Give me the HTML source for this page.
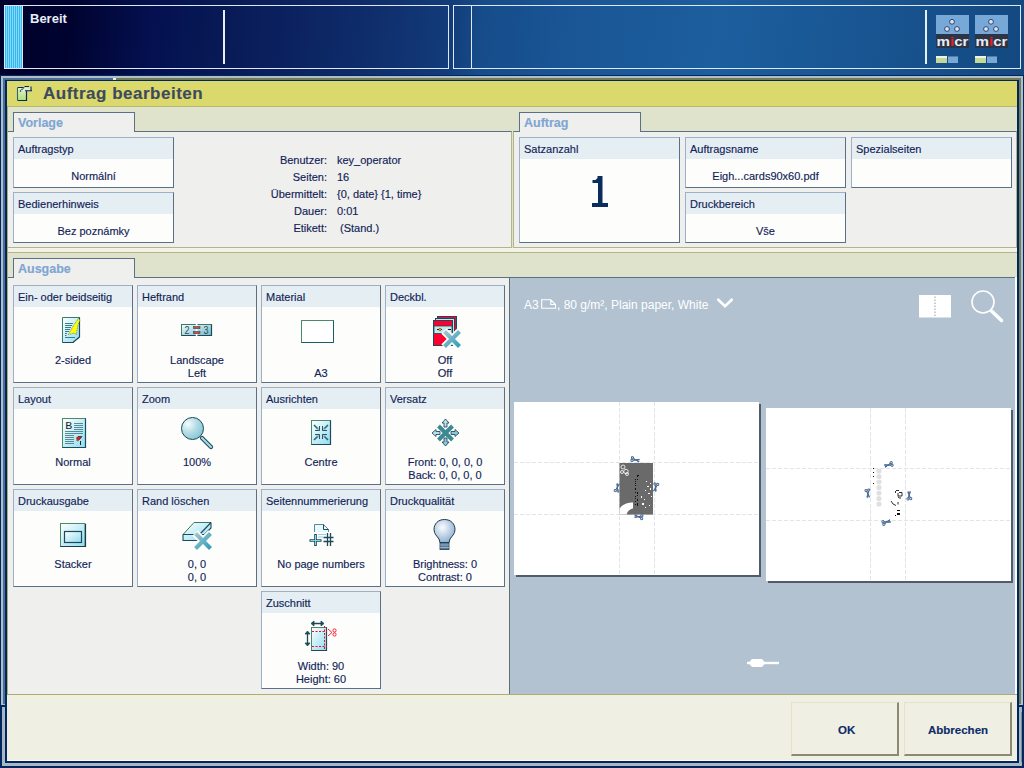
<!DOCTYPE html><html><head><meta charset="utf-8"><style>
*{margin:0;padding:0;box-sizing:border-box}
html,body{width:1024px;height:768px;overflow:hidden}
body{position:relative;background:#002860;font-family:"Liberation Sans",sans-serif;font-size:11px;color:#121e58}
.a{position:absolute}
.nw{white-space:nowrap;-webkit-text-stroke:0.15px currentColor}
.card{position:absolute;border:1px solid;border-color:#9cb0c8 #5a7088 #5a7088 #9cb0c8;background:#fdfdfb}
.card .h{position:absolute;left:0;top:0;right:0;background:#e5eef2}
.tab{position:absolute;border:1px solid #5a7088;border-bottom:none;background:#efefed;height:20px}
svg{position:absolute;overflow:visible}
</style></head><body>
<div class="a" style="left:0;top:0;width:1024px;height:76px;background:linear-gradient(95deg,#00012c 0%,#00032f 7%,#041050 15%,#081a56 22%,#0c2462 30%,#10306e 38%,#133c7a 44%,#164c8a 47%,#1a5696 56%,#1c5e9e 70%,#185490 86%,#13487f 100%)"></div>
<div class="a" style="left:4px;top:5px;width:445px;height:64px;border:1px solid #dfe8f4"></div>
<div class="a" style="left:5px;top:6px;width:17px;height:62px;background:repeating-linear-gradient(90deg,#2cbaf8 0 1px,#8ed6f0 1px 2px)"></div>
<div class="a" style="left:22px;top:6px;width:1px;height:62px;background:#dfe8f4"></div>
<div class="a nw" style="left:30px;top:11px;font-size:13px;line-height:15px;color:#e8eef8;font-weight:bold;-webkit-text-stroke:0;">Bereit</div>
<div class="a" style="left:223px;top:10px;width:2px;height:54px;background:#e8eef8"></div>
<div class="a" style="left:453px;top:5px;width:568px;height:64px;border:1px solid #dfe8f4"></div>
<div class="a" style="left:471px;top:6px;width:1px;height:62px;background:#dfe8f4"></div>
<div class="a" style="left:925px;top:10px;width:2px;height:54px;background:#e8eef8"></div>
<svg style="left:0;top:0;pointer-events:none" width="1024" height="80" viewBox="0 0 1024 80"><rect x="936" y="15" width="33" height="19" fill="#78a8d8"/><rect x="936" y="34" width="33" height="14" fill="#2c3448"/><circle cx="952" cy="21.8" r="2.4" fill="#e0e4ea" stroke="#1c3a6a" stroke-width="0.9"/><circle cx="947" cy="29" r="2.4" fill="#e0e4ea" stroke="#1c3a6a" stroke-width="0.9"/><circle cx="957" cy="29" r="2.4" fill="#e0e4ea" stroke="#1c3a6a" stroke-width="0.9"/><text x="936.5" y="45.5" textLength="32" lengthAdjust="spacingAndGlyphs" font-family="Liberation Sans" font-weight="bold" font-size="13.5" fill="#e8ecf0">m<tspan fill="#e82020">i</tspan>cr</text><rect x="936" y="56" width="11" height="7" fill="#c4d898"/><rect x="936" y="56" width="11" height="2" fill="#f0f4e8"/><rect x="948" y="56" width="10" height="7" fill="#78a8d8"/><rect x="948" y="56" width="10" height="1" fill="#5a7aa0"/><rect x="975" y="15" width="33" height="19" fill="#78a8d8"/><rect x="975" y="34" width="33" height="14" fill="#2c3448"/><circle cx="991" cy="21.8" r="2.4" fill="#e0e4ea" stroke="#1c3a6a" stroke-width="0.9"/><circle cx="986" cy="29" r="2.4" fill="#e0e4ea" stroke="#1c3a6a" stroke-width="0.9"/><circle cx="996" cy="29" r="2.4" fill="#e0e4ea" stroke="#1c3a6a" stroke-width="0.9"/><text x="975.5" y="45.5" textLength="32" lengthAdjust="spacingAndGlyphs" font-family="Liberation Sans" font-weight="bold" font-size="13.5" fill="#e8ecf0">m<tspan fill="#e82020">i</tspan>cr</text><rect x="975" y="56" width="11" height="7" fill="#c4d898"/><rect x="975" y="56" width="11" height="2" fill="#f0f4e8"/><rect x="987" y="56" width="10" height="7" fill="#78a8d8"/><rect x="987" y="56" width="10" height="1" fill="#5a7aa0"/></svg>
<div class="a" style="left:0;top:75px;width:1024px;height:693px;background:#002860"></div>
<div class="a" style="left:1px;top:76px;width:1022px;height:629px;background:#b2bdca"></div>
<div class="a" style="left:3px;top:78px;width:1018px;height:626px;background:#727c58"></div>
<div class="a" style="left:3px;top:78px;width:111px;height:2px;background:#4a6e98"></div>
<div class="a" style="left:113px;top:78px;width:3px;height:2px;background:#e8eef4"></div>
<div class="a" style="left:3px;top:80px;width:2px;height:624px;background:#4a6e98"></div>
<div class="a" style="left:5px;top:80px;width:1014px;height:627px;background:#002860"></div>
<div class="a" style="left:2px;top:707px;width:1020px;height:59px;background:#aab6c2"></div>
<div class="a" style="left:1021px;top:712px;width:1px;height:50px;background:#7a8898"></div>
<div class="a" style="left:5px;top:707px;width:1014px;height:56px;background:#002860"></div>
<div class="a" style="left:7px;top:81px;width:1010px;height:25px;background:#dcd96c"></div>
<div class="a nw" style="left:43px;top:84px;font-size:17px;line-height:20px;color:#3c4a5e;font-weight:bold;letter-spacing:0.5px;">Auftrag bearbeiten</div>
<div class="a" style="left:7px;top:106px;width:1010px;height:146px;background:#e0e3cc;border-top:1px solid #b8b87a"></div>
<div class="a" style="left:7px;top:131px;width:505px;height:117px;background:#efefed;border:1px solid #b4b488;border-top:1px solid #5a7088"></div>
<div class="a" style="left:513px;top:131px;width:504px;height:117px;background:#efefed;border:1px solid #b4b488;border-top:1px solid #5a7088"></div>
<div class="tab" style="left:13px;top:112px;width:122px"></div>
<div class="a nw" style="left:18px;top:116px;font-size:12.5px;line-height:15px;color:#7ea6d4;font-weight:bold;">Vorlage</div>
<div class="tab" style="left:519px;top:112px;width:122px"></div>
<div class="a nw" style="left:524px;top:116px;font-size:12.5px;line-height:15px;color:#7ea6d4;font-weight:bold;">Auftrag</div>
<div class="card" style="left:13px;top:137px;width:161px;height:51px"><div class="h" style="height:21px"></div></div>
<div class="a nw" style="left:18px;top:143px;font-size:11px;line-height:13px;">Auftragstyp</div>
<div class="a nw" style="left:-6.5px;top:170px;font-size:11px;line-height:13px;width:200px;text-align:center;">Normální</div>
<div class="card" style="left:13px;top:192px;width:161px;height:51px"><div class="h" style="height:21px"></div></div>
<div class="a nw" style="left:18px;top:198px;font-size:11px;line-height:13px;">Bedienerhinweis</div>
<div class="a nw" style="left:-6.5px;top:225px;font-size:11px;line-height:13px;width:200px;text-align:center;">Bez poznámky</div>
<div class="a nw" style="left:127px;top:154px;font-size:11px;line-height:13px;width:200px;text-align:right;">Benutzer:</div>
<div class="a nw" style="left:337px;top:154px;font-size:11px;line-height:13px;">key_operator</div>
<div class="a nw" style="left:127px;top:171px;font-size:11px;line-height:13px;width:200px;text-align:right;">Seiten:</div>
<div class="a nw" style="left:337px;top:171px;font-size:11px;line-height:13px;">16</div>
<div class="a nw" style="left:127px;top:188px;font-size:11px;line-height:13px;width:200px;text-align:right;">Übermittelt:</div>
<div class="a nw" style="left:337px;top:188px;font-size:11px;line-height:13px;">{0, date} {1, time}</div>
<div class="a nw" style="left:127px;top:205px;font-size:11px;line-height:13px;width:200px;text-align:right;">Dauer:</div>
<div class="a nw" style="left:337px;top:205px;font-size:11px;line-height:13px;">0:01</div>
<div class="a nw" style="left:127px;top:222px;font-size:11px;line-height:13px;width:200px;text-align:right;">Etikett:</div>
<div class="a nw" style="left:337px;top:222px;font-size:11px;line-height:13px;">&nbsp;(Stand.)</div>
<div class="card" style="left:519px;top:137px;width:161px;height:106px"><div class="h" style="height:21px"></div></div>
<div class="a nw" style="left:524px;top:143px;font-size:11px;line-height:13px;">Satzanzahl</div>
<div class="card" style="left:685px;top:137px;width:161px;height:51px"><div class="h" style="height:21px"></div></div>
<div class="a nw" style="left:690px;top:143px;font-size:11px;line-height:13px;">Auftragsname</div>
<div class="a nw" style="left:665.5px;top:170px;font-size:11px;line-height:13px;width:200px;text-align:center;">Eigh...cards90x60.pdf</div>
<div class="card" style="left:685px;top:192px;width:161px;height:51px"><div class="h" style="height:21px"></div></div>
<div class="a nw" style="left:690px;top:198px;font-size:11px;line-height:13px;">Druckbereich</div>
<div class="a nw" style="left:665.5px;top:225px;font-size:11px;line-height:13px;width:200px;text-align:center;">Vše</div>
<div class="card" style="left:851px;top:137px;width:161px;height:51px"><div class="h" style="height:21px"></div></div>
<div class="a nw" style="left:856px;top:143px;font-size:11px;line-height:13px;">Spezialseiten</div>
<svg style="left:0;top:0" width="1024" height="768"><path d="M597.5 176 H602.5 V203 H608 V207 H592 V203 H598 V183 H592.5 V180 H595.5 L597.5 178 Z" fill="#0c2c5e"/></svg>
<div class="a" style="left:7px;top:248px;width:1010px;height:4px;background:#f2f2e6"></div>
<div class="a" style="left:7px;top:252px;width:1010px;height:443px;background:#e0e3cc;border-top:1px solid #b4b488"></div>
<div class="a" style="left:7px;top:277px;width:502px;height:418px;background:#efefed;border-top:1px solid #5a7088"></div>
<div class="tab" style="left:13px;top:258px;width:122px"></div>
<div class="a nw" style="left:18px;top:262px;font-size:12.5px;line-height:15px;color:#7ea6d4;font-weight:bold;">Ausgabe</div>
<div class="a" style="left:509px;top:277px;width:506px;height:417px;background:#b2c2d1;border-top:1px solid #5a7088;border-left:1px solid #5e6e78"></div>
<div class="a" style="left:1015px;top:277px;width:2px;height:417px;background:#fafcfe"></div>
<div class="card" style="left:13px;top:285px;width:120px;height:98px"><div class="h" style="height:21px"></div></div>
<div class="a nw" style="left:18px;top:291px;font-size:11px;line-height:13px;">Ein- oder beidseitig</div>
<div class="a nw" style="left:-27.0px;top:354px;font-size:11px;line-height:13px;width:200px;text-align:center;">2-sided</div>
<div class="card" style="left:137px;top:285px;width:120px;height:98px"><div class="h" style="height:21px"></div></div>
<div class="a nw" style="left:142px;top:291px;font-size:11px;line-height:13px;">Heftrand</div>
<div class="a nw" style="left:97.0px;top:354px;font-size:11px;line-height:13px;width:200px;text-align:center;">Landscape</div>
<div class="a nw" style="left:97.0px;top:367px;font-size:11px;line-height:13px;width:200px;text-align:center;">Left</div>
<div class="card" style="left:261px;top:285px;width:120px;height:98px"><div class="h" style="height:21px"></div></div>
<div class="a nw" style="left:266px;top:291px;font-size:11px;line-height:13px;">Material</div>
<div class="a nw" style="left:221.0px;top:367px;font-size:11px;line-height:13px;width:200px;text-align:center;">A3</div>
<div class="card" style="left:385px;top:285px;width:120px;height:98px"><div class="h" style="height:21px"></div></div>
<div class="a nw" style="left:390px;top:291px;font-size:11px;line-height:13px;">Deckbl.</div>
<div class="a nw" style="left:345.0px;top:354px;font-size:11px;line-height:13px;width:200px;text-align:center;">Off</div>
<div class="a nw" style="left:345.0px;top:367px;font-size:11px;line-height:13px;width:200px;text-align:center;">Off</div>
<div class="card" style="left:13px;top:387px;width:120px;height:98px"><div class="h" style="height:21px"></div></div>
<div class="a nw" style="left:18px;top:393px;font-size:11px;line-height:13px;">Layout</div>
<div class="a nw" style="left:-27.0px;top:456px;font-size:11px;line-height:13px;width:200px;text-align:center;">Normal</div>
<div class="card" style="left:137px;top:387px;width:120px;height:98px"><div class="h" style="height:21px"></div></div>
<div class="a nw" style="left:142px;top:393px;font-size:11px;line-height:13px;">Zoom</div>
<div class="a nw" style="left:97.0px;top:456px;font-size:11px;line-height:13px;width:200px;text-align:center;">100%</div>
<div class="card" style="left:261px;top:387px;width:120px;height:98px"><div class="h" style="height:21px"></div></div>
<div class="a nw" style="left:266px;top:393px;font-size:11px;line-height:13px;">Ausrichten</div>
<div class="a nw" style="left:221.0px;top:456px;font-size:11px;line-height:13px;width:200px;text-align:center;">Centre</div>
<div class="card" style="left:385px;top:387px;width:120px;height:98px"><div class="h" style="height:21px"></div></div>
<div class="a nw" style="left:390px;top:393px;font-size:11px;line-height:13px;">Versatz</div>
<div class="a nw" style="left:345.0px;top:456px;font-size:11px;line-height:13px;width:200px;text-align:center;">Front: 0, 0, 0, 0</div>
<div class="a nw" style="left:345.0px;top:469px;font-size:11px;line-height:13px;width:200px;text-align:center;">Back: 0, 0, 0, 0</div>
<div class="card" style="left:13px;top:489px;width:120px;height:98px"><div class="h" style="height:21px"></div></div>
<div class="a nw" style="left:18px;top:495px;font-size:11px;line-height:13px;">Druckausgabe</div>
<div class="a nw" style="left:-27.0px;top:558px;font-size:11px;line-height:13px;width:200px;text-align:center;">Stacker</div>
<div class="card" style="left:137px;top:489px;width:120px;height:98px"><div class="h" style="height:21px"></div></div>
<div class="a nw" style="left:142px;top:495px;font-size:11px;line-height:13px;">Rand löschen</div>
<div class="a nw" style="left:97.0px;top:558px;font-size:11px;line-height:13px;width:200px;text-align:center;">0, 0</div>
<div class="a nw" style="left:97.0px;top:571px;font-size:11px;line-height:13px;width:200px;text-align:center;">0, 0</div>
<div class="card" style="left:261px;top:489px;width:120px;height:98px"><div class="h" style="height:21px"></div></div>
<div class="a nw" style="left:266px;top:495px;font-size:11px;line-height:13px;">Seitennummerierung</div>
<div class="a nw" style="left:221.0px;top:558px;font-size:11px;line-height:13px;width:200px;text-align:center;">No page numbers</div>
<div class="card" style="left:385px;top:489px;width:120px;height:98px"><div class="h" style="height:21px"></div></div>
<div class="a nw" style="left:390px;top:495px;font-size:11px;line-height:13px;">Druckqualität</div>
<div class="a nw" style="left:345.0px;top:558px;font-size:11px;line-height:13px;width:200px;text-align:center;">Brightness: 0</div>
<div class="a nw" style="left:345.0px;top:571px;font-size:11px;line-height:13px;width:200px;text-align:center;">Contrast: 0</div>
<div class="card" style="left:261px;top:591px;width:120px;height:98px"><div class="h" style="height:21px"></div></div>
<div class="a nw" style="left:266px;top:597px;font-size:11px;line-height:13px;">Zuschnitt</div>
<div class="a nw" style="left:221.0px;top:660px;font-size:11px;line-height:13px;width:200px;text-align:center;">Width: 90</div>
<div class="a nw" style="left:221.0px;top:673px;font-size:11px;line-height:13px;width:200px;text-align:center;">Height: 60</div>

<svg style="left:0;top:0;pointer-events:none" width="1024" height="768" viewBox="0 0 1024 768">
<defs>
<linearGradient id="pg" x1="0" y1="0" x2="1" y2="1"><stop offset="0" stop-color="#ffffff"/><stop offset="1" stop-color="#8edcf0"/></linearGradient>
<linearGradient id="pg2" x1="0" y1="0" x2="1" y2="1"><stop offset="0" stop-color="#f4fcfe"/><stop offset="1" stop-color="#74b8c8"/></linearGradient>
<linearGradient id="xg" x1="0" y1="0" x2="1" y2="1"><stop offset="0" stop-color="#a8c4cc"/><stop offset="1" stop-color="#2aa0bc"/></linearGradient>
<radialGradient id="lens" cx="0.3" cy="0.3" r="0.8"><stop offset="0" stop-color="#f4fcfc"/><stop offset="0.5" stop-color="#b4dce4"/><stop offset="1" stop-color="#84c4d4"/></radialGradient>
<radialGradient id="bulb" cx="0.4" cy="0.35" r="0.7"><stop offset="0" stop-color="#fafcff"/><stop offset="1" stop-color="#8cacd0"/></radialGradient>
<linearGradient id="grn" x1="0" y1="0" x2="0" y2="1"><stop offset="0" stop-color="#e8f0d8"/><stop offset="1" stop-color="#b0e07a"/></linearGradient>
</defs>

<!-- header icon (17..27, 87..100) -->
<path d="M17.5 87.5 H22 L20.5 91 H26.5 V100.5 H17.5 Z" fill="url(#grn)"/>
<path d="M20.5 91 L24 87.5 H30.5 L31.5 91 Z" fill="#e4ecd0"/>
<path d="M17.5 87.5 H23 M26.5 91 V100.5 H17.5" stroke="#002a60" stroke-width="1.2" fill="none"/>
<path d="M17.5 88 V100.5" stroke="#2a6a6a" stroke-width="1.1"/>
<path d="M24.5 86.5 H29 M31 86.5 V90.5 M25 90.8 H32" stroke="#002a60" stroke-width="1.1" fill="none"/>
<path d="M20 91.5 L24.5 87" stroke="#002a60" stroke-width="1.1" fill="none" stroke-dasharray="1.4 0.8"/>
<!-- 2-sided (62..80, 317..343) -->
<path d="M62.5 317.5 H79.5 V337 L73 342.5 H62.5 Z" fill="url(#pg)" stroke="#3a7a6a" stroke-width="1"/>
<path d="M79.5 317.5 V337 L73 342.5 H62.5" fill="none" stroke="#1c4a5a" stroke-width="1.2"/>
<g stroke="#3c7a88" stroke-width="1">
<path d="M65 323.5H73 M65 325.5H72 M65 327.5H71 M65 329.5H70 M65 331.5H69 M65 333.5H67 M65 335.5H66.5 M65 337.5H75"/>
</g>
<path d="M78.5 318.5 L80 320 L78 325 L77 330 L76.5 334.5 L74 333 L71.5 334 L68.5 334.5 L71 330 L73.5 325.5 Z" fill="#ffff00" stroke="#1c4a5a" stroke-width="0.6" stroke-dasharray="1 0.8"/>

<!-- Heftrand (181..212, 324..336) -->
<rect x="181.5" y="324.5" width="30" height="11" fill="url(#pg2)" stroke="#3a7a6a" stroke-width="1"/>
<path d="M181.5 335.5 H211.5 V324.5" fill="none" stroke="#1c4a5a" stroke-width="1.2"/>
<rect x="195.8" y="323.5" width="1.6" height="13.5" fill="#ffffff"/>
<text x="184.6" y="334" font-family="Liberation Sans" font-size="10" fill="#24505c" textLength="5" lengthAdjust="spacingAndGlyphs">2</text>
<text x="203.6" y="334" font-family="Liberation Sans" font-size="10" fill="#24505c" textLength="5" lengthAdjust="spacingAndGlyphs">3</text>
<rect x="193.5" y="326.6" width="6.5" height="2" fill="#ee4030" stroke="#1c4a5a" stroke-width="0.6"/>
<rect x="193.5" y="331.6" width="6.5" height="2" fill="#ee4030" stroke="#1c4a5a" stroke-width="0.6"/>

<!-- Material (301..334, 320..343) -->
<rect x="301.5" y="320.5" width="32" height="22" fill="#ffffff" stroke="#4a8a6a" stroke-width="1"/>
<path d="M333.5 320.5 V342.5 H301.5" fill="none" stroke="#1e5a6a" stroke-width="1"/>

<!-- Deckbl (433..461, 316..347) -->
<rect x="437.5" y="316.5" width="19" height="23" fill="#ff0030" stroke="#1c4a5a" stroke-width="1"/>
<rect x="435.5" y="318.5" width="19" height="24" fill="#b8e8f4" stroke="#1c4a5a" stroke-width="1"/>
<rect x="433.5" y="320.5" width="19" height="25" fill="#ff0030" stroke="#1c4a5a" stroke-width="1"/>
<rect x="434" y="326" width="18" height="7.5" fill="#c8e8ee" stroke="#1c4a5a" stroke-width="0.8"/>
<path d="M437 329.5 H442 M446 329.5 H451" stroke="#101820" stroke-width="1"/>
<circle cx="440" cy="329.5" r="1.2" fill="#f0e800" stroke="#101820" stroke-width="0.5"/>
<path d="M444 336 L460 352 M460 336 L444 352" stroke="#ffffff" stroke-width="7.5" transform="translate(0,-5)"/>
<path d="M444.5 336.5 L459.5 351.5 M459.5 336.5 L444.5 351.5" stroke="url(#xg)" stroke-width="4.2" transform="translate(0,-5)"/>

<!-- Layout (62..86, 418..448) -->
<rect x="62.5" y="418.5" width="23" height="29" fill="url(#pg)" stroke="#4a8a6a" stroke-width="1"/>
<path d="M85.5 418.5 V447.5 H62.5" fill="none" stroke="#1c4a5a" stroke-width="1.2"/>
<text x="65.2" y="429" font-family="Liberation Mono" font-size="10" fill="#202830" textLength="7" lengthAdjust="spacingAndGlyphs">B</text>
<g stroke="#4a8088" stroke-width="0.9">
<path d="M74 423.5H83 M74 425.5H83 M74 427.5H83 M74 429.5H83 M65 431.5H83 M65 433.5H83 M65 435.5H74 M65 437.5H74 M65 439.5H74 M65 441.5H74 M65 443.5H74"/>
</g>
<path d="M76.5 438 L78 436.5 L82 436.5 L80 439 L77.5 441 Z" fill="#ee1030" stroke="#202830" stroke-width="0.7"/>
<path d="M76.5 438.5 L77 441" stroke="#f08020" stroke-width="1.2"/>
<path d="M80.5 441 V445" stroke="#202830" stroke-width="1"/>

<!-- Zoom magnifier -->
<path d="M202 438 L211 447" stroke="#1c4a5a" stroke-width="4.2" stroke-linecap="round"/>
<path d="M202 438 L211 447" stroke="#a8d8e4" stroke-width="2.2" stroke-linecap="round"/>
<circle cx="192.5" cy="428.5" r="11" fill="url(#lens)" stroke="#1c4a5a" stroke-width="1"/>

<!-- Ausrichten (311..331, 420..445) -->
<rect x="311.5" y="420.5" width="19" height="24" fill="url(#pg)" stroke="#4a8a6a" stroke-width="1"/>
<path d="M330.5 420.5 V444.5 H311.5" fill="none" stroke="#1c4a5a" stroke-width="1.2"/>
<g stroke="#2c6a78" stroke-width="1.7" fill="none">
<path d="M314 425 L318 429 M328 425 L324 429 M314 440 L318 436 M328 440 L324 436"/>
</g>
<g fill="#a4c4c4">
<path d="M320 426 V431 H315 Z M322 426 V431 H327 Z M320 439 V434 H315 Z M322 439 V434 H327 Z"/>
</g>
<g stroke="#1c4a5a" stroke-width="0.9" fill="none">
<path d="M319.5 426 V430.5 H315 M322.5 426 V430.5 H327 M319.5 439 V434.5 H315 M322.5 439 V434.5 H327"/>
</g>
<!-- Versatz (432..459, 419..446) -->
<path d="M438.5 426 L452.5 440 M452.5 426 L438.5 440" stroke="#3a8a96" stroke-width="4"/>
<path d="M445.5 419 L449 423 H447 V427 H444 V423 H442 Z" fill="#b8e0ec" stroke="#1c3a4a" stroke-width="0.8"/>
<path d="M445.5 446 L449 442 H447 V438 H444 V442 H442 Z" fill="#88c8dc" stroke="#1c3a4a" stroke-width="0.8"/>
<path d="M432 433 L436 429.5 V431.5 H440 V434.5 H436 V436.5 Z" fill="#b8e0ec" stroke="#1c3a4a" stroke-width="0.8"/>
<path d="M459 433 L455 429.5 V431.5 H451 V434.5 H455 V436.5 Z" fill="#88c8dc" stroke="#1c3a4a" stroke-width="0.8"/>

<!-- Stacker (60..86, 523..547) -->
<rect x="60.5" y="523.5" width="24.5" height="23" fill="url(#pg)" stroke="#4a8a6a" stroke-width="1"/>
<path d="M85.5 524 V546.5 H60.5" fill="none" stroke="#1c3a4a" stroke-width="1.2"/>
<rect x="64.5" y="531.5" width="17" height="11" fill="url(#pg)" stroke="#1c4a5a" stroke-width="1.2"/>

<!-- Rand loeschen -->
<path d="M183 534 L194 522.5 H211 V528 L204 535 V540.5 H183 Z" fill="url(#pg)"/>
<path d="M183 534.5 L194 522.5 H211" fill="none" stroke="#3a7a5a" stroke-width="1"/>
<path d="M211 522.5 V528 L204 535 M183 534.5 H204 M183 534.5 V540.5 H204 M211 522.5 L200 534" fill="none" stroke="#1c4a5a" stroke-width="1.1"/>
<path d="M195 533 L211 549 M211 533 L195 549" stroke="#ffffff" stroke-width="7.5"/>
<path d="M195.5 533.5 L210.5 548.5 M210.5 533.5 L195.5 548.5" stroke="url(#xg)" stroke-width="4.2"/>

<!-- page numbers -->
<path d="M314.5 532 V524.5 H323.5 L328.5 529.5 V532" fill="#e8f8fc" stroke="#5a8a98" stroke-width="1"/>
<path d="M323.5 524.5 V529.5 H328.5" fill="none" stroke="#1c4a5a" stroke-width="1"/>
<path d="M318 534.5 H326 M318 537 H323" stroke="#90d0e4" stroke-width="1.2"/>
<path d="M315.5 534 V546 M309.5 540.5 H321.5" stroke="#1c4a5a" stroke-width="2.6"/>
<path d="M315.5 535 V545 M310.5 540.5 H320.5" stroke="#80d4ec" stroke-width="1"/>
<g stroke="#1c4a5a" stroke-width="1.3">
<path d="M327.5 533 V546 M330.5 533 V546 M323.5 537.5 H333.5 M323.5 541.5 H333.5"/>
</g>

<!-- Bulb (434..455, 519..550) -->
<path d="M444.5 519.5 C438 519.5 434 524 434 529.5 C434 534 437 536 439 539 L440 542.5 H449 L450 539 C452 536 455 534 455 529.5 C455 524 451 519.5 444.5 519.5 Z" fill="url(#bulb)" stroke="#1c3a4a" stroke-width="1"/>
<rect x="440" y="542.5" width="9" height="7" fill="#5a7a9a" stroke="#1c3a4a" stroke-width="0.8"/>
<path d="M440 545 H449 M440 547.5 H449" stroke="#a8c0d8" stroke-width="0.8"/>

<!-- Zuschnitt -->
<rect x="311.5" y="627.5" width="15" height="23" fill="url(#pg)" stroke="#4a8a6a" stroke-width="1"/>
<path d="M326.5 627.5 V650.5 H311.5" fill="none" stroke="#1c4a5a" stroke-width="1.2"/>
<path d="M312 631.5 H327 M312 646.5 H327 M324.5 626 V651" stroke="#ee1020" stroke-width="1" stroke-dasharray="2 1.5"/>
<path d="M312 623.5 H323 M307.5 632 V645" stroke="#1c4a5a" stroke-width="1.3"/>
<path d="M311 623.5 L314 621 V626 Z M324 623.5 L321 621 V626 Z M307.5 631 L305 634 H310 Z M307.5 646 L305 643 H310 Z" fill="#1c4a5a" stroke="#1c4a5a" stroke-width="0.8"/>
<path d="M328 629 L332 632.5 L328 636" fill="none" stroke="#ee1020" stroke-width="0.9"/>
<circle cx="334.5" cy="630.5" r="1.6" fill="none" stroke="#ee1020" stroke-width="0.9"/>
<circle cx="334.5" cy="634.5" r="1.6" fill="none" stroke="#ee1020" stroke-width="0.9"/>
</svg>

<svg style="left:0;top:0;pointer-events:none" width="1024" height="768" viewBox="0 0 1024 768"><rect x="516" y="404" width="245" height="173" fill="#525c68"/><rect x="514" y="402" width="245" height="173" fill="#ffffff"/><path d="M619.5 402 V575" stroke="#e0e5eb" stroke-width="1" stroke-dasharray="4 2"/><path d="M654.5 402 V575" stroke="#e0e5eb" stroke-width="1" stroke-dasharray="4 2"/><path d="M514 462.5 H759" stroke="#e0e5eb" stroke-width="1" stroke-dasharray="4 2"/><path d="M514 514.5 H759" stroke="#e0e5eb" stroke-width="1" stroke-dasharray="4 2"/><rect x="768" y="410" width="245" height="173" fill="#525c68"/><rect x="766" y="408" width="245" height="173" fill="#ffffff"/><path d="M870.5 408 V581" stroke="#e0e5eb" stroke-width="1" stroke-dasharray="4 2"/><path d="M905.5 408 V581" stroke="#e0e5eb" stroke-width="1" stroke-dasharray="4 2"/><path d="M766 468.5 H1011" stroke="#e0e5eb" stroke-width="1" stroke-dasharray="4 2"/><path d="M766 520.5 H1011" stroke="#e0e5eb" stroke-width="1" stroke-dasharray="4 2"/><rect x="619.5" y="463" width="33.5" height="51.6" fill="#6a6a6a"/><path d="M619.5 514.6 V509 Q622 503.5 631 502.5 H633 V508.5 Q628 509.5 626.5 514.6 Z" fill="#ffffff"/><g fill="none" stroke="#ffffff" stroke-width="0.8"><circle cx="623" cy="467" r="2"/><circle cx="626" cy="471.5" r="2.2"/><circle cx="622" cy="472" r="1.5"/><circle cx="627" cy="474" r="1.5"/></g><g fill="#ffffff"><rect x="646" y="481" width="1" height="1"/><rect x="650" y="483" width="1" height="1"/><rect x="647" y="486" width="2" height="1"/><rect x="650" y="488" width="1" height="2"/><rect x="645" y="490" width="1" height="1"/><rect x="648" y="493" width="2" height="1"/><rect x="651" y="496" width="1" height="1"/><rect x="641" y="496" width="1" height="2"/><rect x="644" y="499" width="1" height="1"/><rect x="642" y="503" width="2" height="2"/><rect x="649" y="505" width="1" height="1"/><rect x="645" y="507" width="1" height="1"/></g><g fill="#101010"><rect x="635" y="479" width="1" height="1"/><rect x="635" y="481" width="1" height="1"/><rect x="635" y="483" width="1" height="1"/><rect x="635" y="485" width="1" height="1"/><rect x="635" y="488" width="1" height="2"/><rect x="635" y="492" width="1" height="1"/><rect x="635" y="496" width="1" height="1"/><rect x="635" y="498" width="1" height="1"/><rect x="635" y="501" width="1" height="1"/><rect x="635" y="504" width="1" height="1"/><rect x="637" y="476" width="1" height="1"/><rect x="637" y="479" width="1" height="1"/><rect x="637" y="492" width="1" height="2"/><rect x="637" y="495" width="1" height="1"/><rect x="637" y="499" width="1" height="2"/><rect x="637" y="503" width="1" height="3"/><rect x="637" y="475" width="2" height="1"/></g><g transform="translate(635,459.5) rotate(10)"><g fill="none" stroke="#4c6c96" stroke-width="1"><circle cx="-2.8" cy="-1.3" r="1.1"/><circle cx="-2.8" cy="1.5" r="1.1"/></g><path d="M-1.8 -0.8 L4.5 1.4 L4 1.8 Z M-1.8 1 L4.5 -0.4 L4 -0.9 Z" fill="#4c6c96" stroke="#4c6c96" stroke-width="0.9"/></g><g transform="translate(617,488) rotate(-80)"><g fill="none" stroke="#4c6c96" stroke-width="1"><circle cx="-2.8" cy="-1.3" r="1.1"/><circle cx="-2.8" cy="1.5" r="1.1"/></g><path d="M-1.8 -0.8 L4.5 1.4 L4 1.8 Z M-1.8 1 L4.5 -0.4 L4 -0.9 Z" fill="#4c6c96" stroke="#4c6c96" stroke-width="0.9"/></g><g transform="translate(656,487) rotate(100)"><g fill="none" stroke="#4c6c96" stroke-width="1"><circle cx="-2.8" cy="-1.3" r="1.1"/><circle cx="-2.8" cy="1.5" r="1.1"/></g><path d="M-1.8 -0.8 L4.5 1.4 L4 1.8 Z M-1.8 1 L4.5 -0.4 L4 -0.9 Z" fill="#4c6c96" stroke="#4c6c96" stroke-width="0.9"/></g><g transform="translate(639,517) rotate(185)"><g fill="none" stroke="#4c6c96" stroke-width="1"><circle cx="-2.8" cy="-1.3" r="1.1"/><circle cx="-2.8" cy="1.5" r="1.1"/></g><path d="M-1.8 -0.8 L4.5 1.4 L4 1.8 Z M-1.8 1 L4.5 -0.4 L4 -0.9 Z" fill="#4c6c96" stroke="#4c6c96" stroke-width="0.9"/></g><g fill="#e0e0e0"><circle cx="879" cy="471.0" r="2.6"/><circle cx="879" cy="476.5" r="2.6"/><circle cx="879" cy="482.0" r="2.6"/><circle cx="879" cy="487.5" r="2.6"/><circle cx="879" cy="493.0" r="2.6"/><circle cx="879" cy="498.5" r="2.6"/><circle cx="879" cy="504.0" r="2.6"/></g><g fill="#101010"><rect x="873" y="468" width="1" height="1"/><rect x="873" y="472" width="1" height="1"/><rect x="873" y="476" width="1" height="1"/><rect x="873" y="483" width="1" height="1"/><rect x="897" y="513" width="3" height="2"/><rect x="897" y="510" width="3" height="1"/><rect x="895" y="515" width="1" height="1"/></g><g fill="none" stroke="#181818" stroke-width="0.9"><path d="M896 490.5 H899 M895.5 491 V493 M899 492.5 H902 V496 H898 V493 M898 496.5 L899 498 H901 M891 501 L893 504 L896 505.5 M898 502 V504.5"/></g><g transform="translate(889,465) rotate(160)"><g fill="none" stroke="#4c6c96" stroke-width="1"><circle cx="-2.8" cy="-1.3" r="1.1"/><circle cx="-2.8" cy="1.5" r="1.1"/></g><path d="M-1.8 -0.8 L4.5 1.4 L4 1.8 Z M-1.8 1 L4.5 -0.4 L4 -0.9 Z" fill="#4c6c96" stroke="#4c6c96" stroke-width="0.9"/></g><g transform="translate(868,493) rotate(80)"><g fill="none" stroke="#4c6c96" stroke-width="1"><circle cx="-2.8" cy="-1.3" r="1.1"/><circle cx="-2.8" cy="1.5" r="1.1"/></g><path d="M-1.8 -0.8 L4.5 1.4 L4 1.8 Z M-1.8 1 L4.5 -0.4 L4 -0.9 Z" fill="#4c6c96" stroke="#4c6c96" stroke-width="0.9"/></g><g transform="translate(909,496) rotate(-95)"><g fill="none" stroke="#4c6c96" stroke-width="1"><circle cx="-2.8" cy="-1.3" r="1.1"/><circle cx="-2.8" cy="1.5" r="1.1"/></g><path d="M-1.8 -0.8 L4.5 1.4 L4 1.8 Z M-1.8 1 L4.5 -0.4 L4 -0.9 Z" fill="#4c6c96" stroke="#4c6c96" stroke-width="0.9"/></g><g transform="translate(886,522) rotate(-20)"><g fill="none" stroke="#4c6c96" stroke-width="1"><circle cx="-2.8" cy="-1.3" r="1.1"/><circle cx="-2.8" cy="1.5" r="1.1"/></g><path d="M-1.8 -0.8 L4.5 1.4 L4 1.8 Z M-1.8 1 L4.5 -0.4 L4 -0.9 Z" fill="#4c6c96" stroke="#4c6c96" stroke-width="0.9"/></g><rect x="919" y="295" width="32" height="22.5" fill="#ffffff"/><path d="M935 296.5 V316" stroke="#b4c2ce" stroke-width="1.6" stroke-dasharray="1.6 1.4"/><circle cx="983" cy="302" r="11" fill="none" stroke="#ffffff" stroke-width="1.6"/><path d="M991.5 311 L1001.5 320.5" stroke="#ffffff" stroke-width="3.6" stroke-linecap="round"/><path d="M541.7 299.8 H550.8 L555.5 304.5 V308.2 H541.7 Z M550.8 299.8 V304.5 H555.5" fill="none" stroke="#ffffff" stroke-width="1.1"/><path d="M717.5 299 L725 306.3 L732.5 299" fill="none" stroke="#ffffff" stroke-width="2.6"/><path d="M747 663 H779" stroke="#ffffff" stroke-width="2.4"/><path d="M752 659 H762 L765.5 663 L762 667 H752 L748.5 663 Z" fill="#ffffff"/></svg>
<div class="a nw" style="left:524px;top:297.5px;font-size:12px;line-height:14px;color:#ffffff;-webkit-text-stroke:0;">A3</div>
<div class="a nw" style="left:557px;top:297.5px;font-size:12px;line-height:14px;color:#ffffff;-webkit-text-stroke:0;">, 80 g/m², Plain paper, White</div>
<div class="a" style="left:7px;top:106px;width:1px;height:589px;background:#b0ac70"></div>
<div class="a" style="left:7px;top:694px;width:1010px;height:67px;background:#f0efe4;border-top:1px solid #b0ac70"></div>
<div class="a" style="left:7px;top:760px;width:1010px;height:1px;background:#fdfdf6"></div>
<div class="a" style="left:791px;top:702px;width:108px;height:54px;border-top:1px solid #e6e2c4;border-left:1px solid #e6e2c4;border-right:2px solid #8c8a72;border-bottom:2px solid #8c8a72;background:#f0efe4"></div>
<div class="a" style="left:904px;top:702px;width:108px;height:54px;border-top:1px solid #e6e2c4;border-left:1px solid #e6e2c4;border-right:2px solid #8c8a72;border-bottom:2px solid #8c8a72;background:#f0efe4"></div>
<div class="a nw" style="left:838px;top:724px;font-size:11.5px;line-height:13px;color:#0c2c6a;font-weight:bold;">OK</div>
<div class="a nw" style="left:928px;top:724px;font-size:11.5px;line-height:13px;color:#0c2c6a;font-weight:bold;">Abbrechen</div>
</body></html>
